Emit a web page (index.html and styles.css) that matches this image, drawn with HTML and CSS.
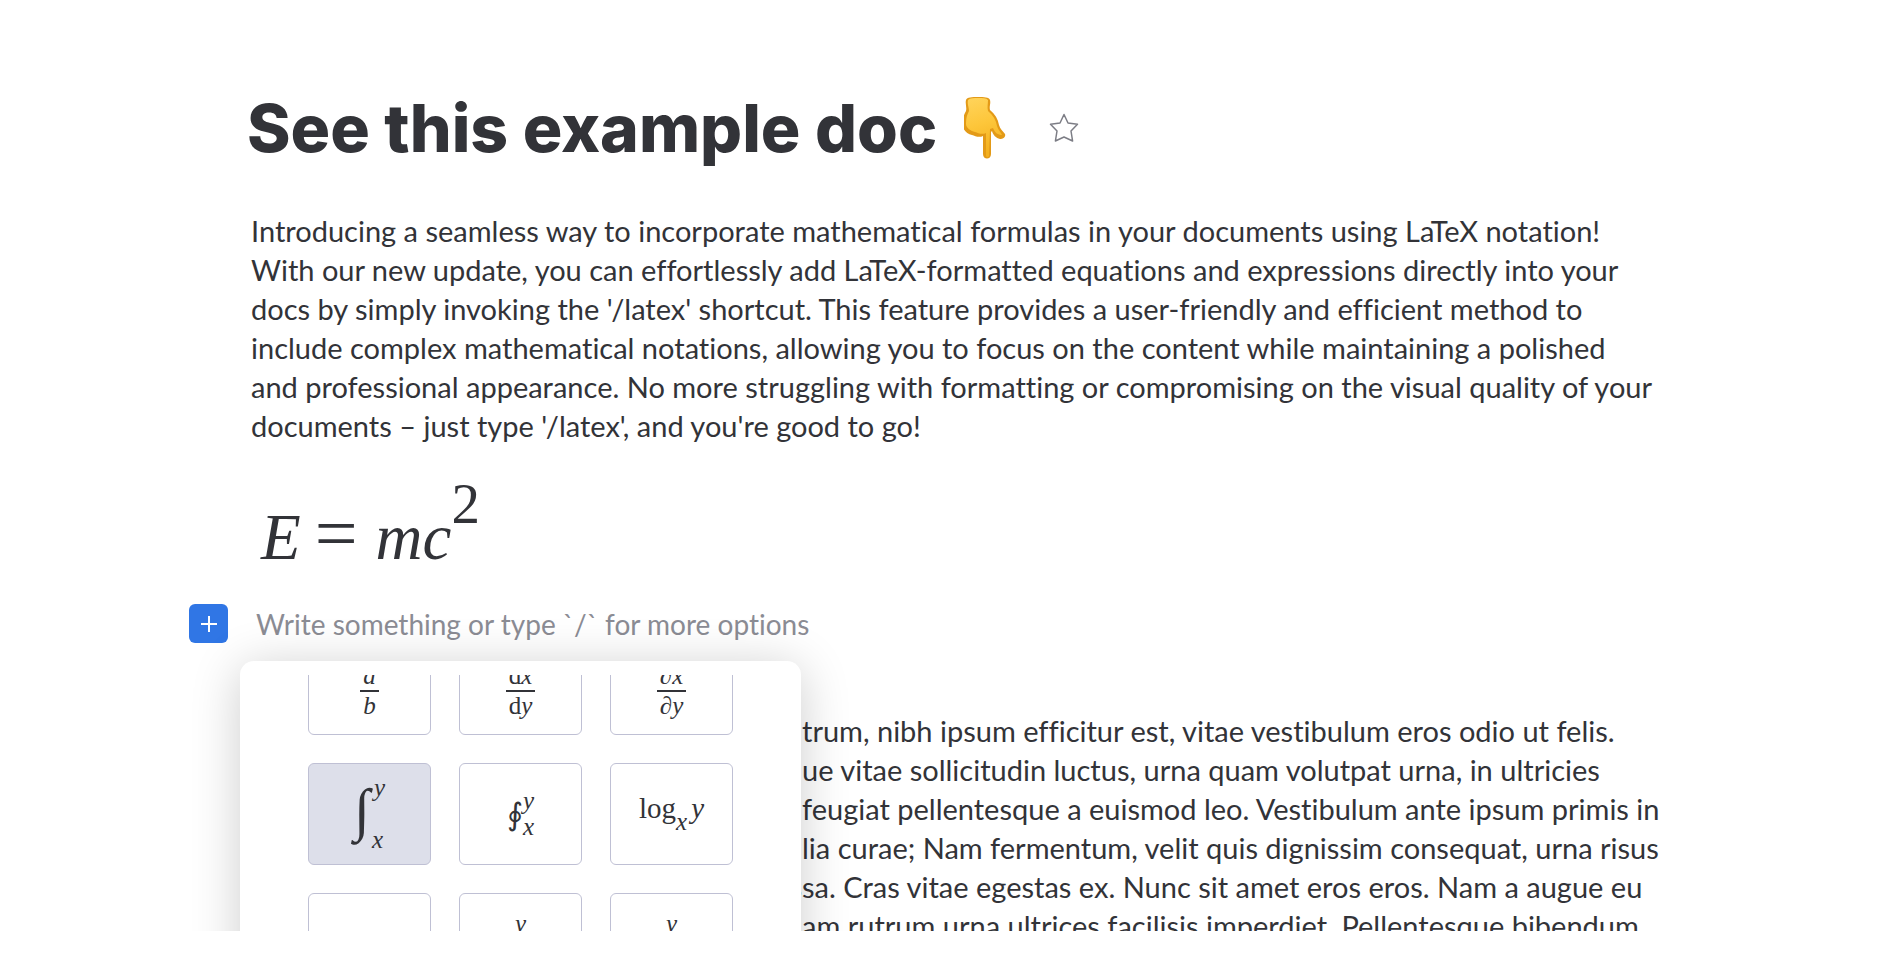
FILE: index.html
```html
<!DOCTYPE html>
<html lang="en">

<head>
  <meta charset="UTF-8">
  <meta name="viewport" content="width=device-width, initial-scale=1.0">
  <title>See this example doc</title>
  <link rel="stylesheet" href="styles.css">
</head>

<body>
  <main class="doc">
    <header class="doc-header">
      <h1>See this example doc</h1>
      <svg class="hand" viewBox="0 0 42 64" role="img" aria-label="pointing down">
        <defs>
          <linearGradient id="skin" x1="0" y1="0" x2="0.2" y2="1">
            <stop offset="0" stop-color="#ffd45c" />
            <stop offset="0.5" stop-color="#fdc63a" />
            <stop offset="1" stop-color="#f3b01f" />
          </linearGradient>
        </defs>
        <path fill="#e39a17" d="M2 4C3 1 8 1 14 1s11 0 12 3c1 4-1 6 0 10 5 4 8 9 9 15 1 4 4 6 6 9 1 3-2 5-5 5-4-1-7-4-8-8l-1 1v22c0 6-8 6-8 0V40c-4 2-8 0-11-1-5-1-9-5-9-9 0-7 0-10 3-15C3 11 1 8 2 4z" />
        <path fill="url(#skin)" d="M4 4c2-2 6-2 10-2 5 0 8 0 10 2 0 4-1 7 0 11 5 4 8 9 9 15 1 4 4 6 5 9-4 0-7-2-9-7l-3 1-1 26c0 3-3 3-3 0V37c-4 2-8 0-11-1-4-1-9-4-9-8 0-6 1-9 3-13C5 11 3 8 4 4z" />
      </svg>
      <button type="button" class="star" aria-label="Add to favorites">
        <svg viewBox="0 0 30 30">
          <path d="M15 1.500l4 8.500 9.500 1.200-6.500 6.800 1.600 10-8.600-4-8.600 4 1.600-10-6.500-6.800 9.500-1.200z" />
        </svg>
      </button>
    </header>

    <p class="text">
      Introducing a seamless way to incorporate mathematical formulas in your documents using LaTeX notation!<br>
      With our new update, you can effortlessly add LaTeX-formatted equations and expressions directly into your<br>
      docs by simply invoking the '/latex' shortcut. This feature provides a user-friendly and efficient method to<br>
      include complex mathematical notations, allowing you to focus on the content while maintaining a polished<br>
      and professional appearance. No more struggling with formatting or compromising on the visual quality of your<br>
      documents – just type '/latex', and you're good to go!
    </p>

    <div class="equation"><i>E</i><span class="equals">=</span><i>mc</i><sup>2</sup></div>

    <div class="editor">
      <button type="button" class="add-btn" aria-label="Add block">
        <svg viewBox="0 0 16 16"><path d="M8 0v16M0 8h16" /></svg>
      </button>
      <input type="text" class="block-input" aria-label="New block" placeholder="Write something or type `/` for more options">

      <!-- formula picker -->
      <div class="picker">
        <div class="picker-scroll">
          <div class="picker-grid">
            <button type="button" class="cell" aria-label="Fraction">
              <span class="frac"><i>a</i><i class="den">b</i></span>
            </button>
            <button type="button" class="cell" aria-label="Derivative">
              <span class="frac"><span>d<i>x</i></span><span class="den">d<i>y</i></span></span>
            </button>
            <button type="button" class="cell" aria-label="Partial derivative">
              <span class="frac"><span>∂<i>x</i></span><span class="den">∂<i>y</i></span></span>
            </button>

            <button type="button" class="cell selected" aria-label="Integral">
              <span class="integral">∫</span><span class="limits tall"><i class="upper">y</i><i>x</i></span>
            </button>
            <button type="button" class="cell" aria-label="Contour integral">
              <span class="contour">∮</span><span class="limits"><i>y</i><i>x</i></span>
            </button>
            <button type="button" class="cell" aria-label="Logarithm">
              <span class="log">log<sub>x</sub><i>y</i></span>
            </button>

            <button type="button" class="cell" aria-label="Limit"></button>
            <button type="button" class="cell top" aria-label="Sum"><i>y</i></button>
            <button type="button" class="cell top" aria-label="Product"><i>y</i></button>
          </div>
        </div>
      </div>
    </div>

    <p class="text behind">
      <span></span><span>trum, nibh ipsum efficitur est, vitae vestibulum eros odio ut felis.</span>
      <span>q</span><span>ue vitae sollicitudin luctus, urna quam volutpat urna, in ultricies</span>
      <span></span><span>feugiat pellentesque a euismod leo. Vestibulum ante ipsum primis in</span>
      <span>i</span><span>lia curae; Nam fermentum, velit quis dignissim consequat, urna risus</span>
      <span>s</span><span>sa. Cras vitae egestas ex. Nunc sit amet eros eros. Nam a augue eu</span>
      <span></span><span>am rutrum urna ultrices facilisis imperdiet. Pellentesque bibendum</span>
    </p>
  </main>
</body>

</html>
```

FILE: styles.css
```css
* {
  box-sizing: border-box;
}

body {
  margin: 0;
  background-color: white;
  color: #323338;
  font-family: Lato, sans-serif;
  font-variant-ligatures: none;
}

.doc {
  max-width: 1522px;
  height: calc(100vh - 29px);
  margin: 0 auto;
  padding: 88px 0 0 62px;
  overflow: hidden;
}

.doc-header {
  display: flex;
  align-items: center;
  height: 80px;
  margin-left: -4px;
}

h1 {
  margin: 0;
  font-family: Inter, sans-serif;
  font-size: 66px;
  font-weight: 800;
  line-height: 80px;
  white-space: nowrap;
}

.hand {
  width: 42px;
  height: 64px;
  margin-left: 27px;
}

.star {
  width: 30px;
  height: 30px;
  margin-left: 43px;
  padding: 0;
  border: none;
  background: none;
  cursor: pointer;
}

.star svg {
  display: block;
  fill: none;
  stroke: #7c7d85;
  stroke-width: 1.5;
  stroke-linejoin: round;
}

.text {
  margin: 43px 0 0;
  font-size: 29px;
  line-height: 39px;
  white-space: nowrap;
}

.equation {
  display: flex;
  align-items: baseline;
  height: 112px;
  margin: 20px 0 27px 10px;
  font-family: "Liberation Serif", serif;
  font-size: 65px;
  line-height: 136px;
}

.equals {
  margin: 0 18px 0 14px;
  font-size: 76px;
}

.equation sup {
  position: relative;
  top: -36px;
  font-size: 57px;
  line-height: 1;
}

.editor {
  position: relative;
  display: flex;
  align-items: center;
  gap: 28px;
  margin-left: -62px;
}

.add-btn {
  display: flex;
  align-items: center;
  justify-content: center;
  width: 39px;
  height: 39px;
  border: none;
  border-radius: 6px;
  background-color: #3076e5;
  cursor: pointer;
}

.add-btn svg {
  flex: none;
  width: 16px;
  height: 16px;
  stroke: white;
  stroke-width: 2;
}

.block-input {
  flex: 1;
  height: 39px;
  padding: 0;
  border: none;
  outline: none;
  background: none;
  color: #323338;
  font-family: Lato, sans-serif;
  font-size: 28px;
  font-variant-ligatures: none;
}

.block-input::placeholder {
  color: #8b8c94;
  opacity: 1;
}

.picker {
  position: absolute;
  top: 57px;
  left: 51px;
  width: 561px;
  padding-top: 14px;
  border-radius: 14px;
  background-color: white;
  box-shadow: 0 6px 50px rgba(0, 0, 0, 0.2);
}

.picker-scroll {
  height: 420px;
  padding: 0 68px;
  overflow: hidden;
}

.picker-grid {
  display: grid;
  grid-template-columns: repeat(3, 1fr);
  gap: 28px;
  margin-top: -42px;
}

.cell {
  display: flex;
  align-items: center;
  justify-content: center;
  height: 102px;
  padding: 0;
  border: 1px solid #bfc0d4;
  border-radius: 6px;
  background-color: white;
  color: #323338;
  font-family: "Liberation Serif", serif;
  font-size: 25px;
  cursor: pointer;
}

.cell.selected {
  background-color: #dddfea;
}

.cell.top {
  align-items: flex-start;
  padding-top: 16px;
}

.frac {
  display: flex;
  flex-direction: column;
  align-items: center;
  line-height: 28px;
  padding-top: 14px;
}

.den {
  padding: 0 3px;
  border-top: 2px solid #323338;
}

.integral {
  padding-bottom: 8px;
  font-size: 58px;
  line-height: 58px;
}

.contour {
  font-size: 31px;
}

.limits {
  display: flex;
  flex-direction: column;
  line-height: 26px;
}

.limits.tall {
  gap: 26px;
}

.upper {
  padding-left: 4px;
}

.log {
  font-size: 29px;
}

.log sub {
  font-size: 25px;
  font-style: italic;
  vertical-align: -12px;
}

.log i {
  margin-left: 4px;
}

/* this paragraph runs on under the picker */
.behind {
  display: grid;
  grid-template-columns: 551px 1fr;
  margin-top: 68px;
}

.behind span:nth-child(odd) {
  text-align: right;
}
```
